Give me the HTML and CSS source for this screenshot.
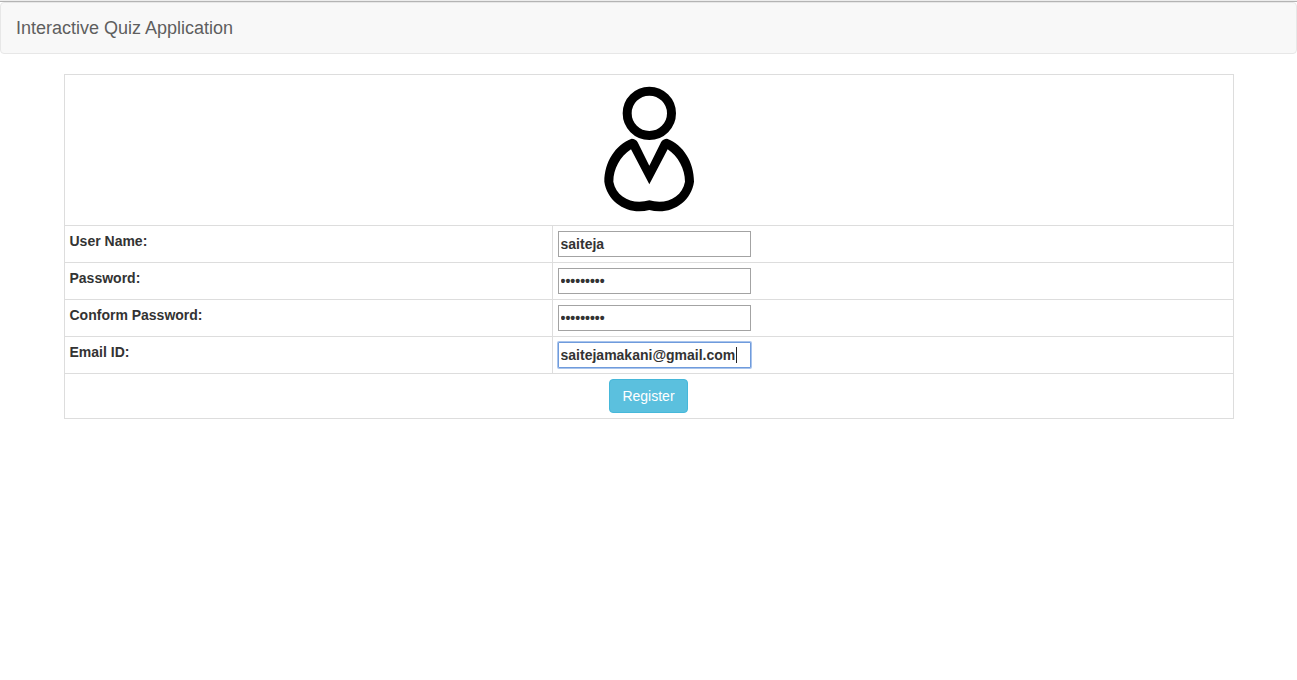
FILE: index.html
```html
<!DOCTYPE html>
<html lang="en">
<head>
<meta charset="utf-8">
<title>Interactive Quiz Application</title>
<link rel="stylesheet" href="styles.css">
</head>
<body>
<nav class="navbar"><a class="brand" href="#">Interactive Quiz Application</a></nav>
<main class="container">
<form>
<table class="form-table">
<colgroup><col class="label-col"><col></colgroup>
<tbody>
<tr><td class="center" colspan="2">
<svg class="avatar" viewBox="27 30 420 420" role="img" aria-label="User">
<circle cx="238" cy="130" r="66.5" fill="none" stroke="#000" stroke-width="27"/>
<path fill-rule="evenodd" d="M185 206C192 206 200 210 203 217L238 287L273 217C276 210 284 206 291 206C340 225 372 275 372 335C365 388 318 424 268 424Q252 424 238 420Q224 424 208 424C158 424 110 388 103 335C103 275 136 225 185 206ZM183 238L238 343L293 238C325 260 345 297 345 335C338 373 305 395 268 395Q252 395 238 391Q224 395 208 395C171 395 137 373 130 335C130 297 150 260 183 238Z"/>
</svg></td></tr>
<tr><th><label for="user">User Name:</label></th><td><input class="field" id="user" type="text" value="saiteja"></td></tr>
<tr><th><label for="pass">Password:</label></th><td><input class="field" id="pass" type="password" value="saiteja12"></td></tr>
<tr><th><label for="confirm">Conform Password:</label></th><td><input class="field" id="confirm" type="password" value="saiteja12"></td></tr>
<tr><th><label for="email">Email ID:</label></th><td><div class="active"><input class="field field-active" id="email" type="text" value="saitejamakani@gmail.com"><span class="caret"></span></div></td></tr>
<tr><td class="center" colspan="2"><button class="btn" type="submit">Register</button></td></tr>
</tbody>
</table>
</form>
</main>
</body>
</html>
```
FILE: styles.css
```css
* { box-sizing: border-box; }
html {
  background: #fff;
  border-top: 1px solid #ededed;
}
body {
  margin: 0;
  border-top: 1px solid #b4b4b4;
  color: #333;
  font-family: "Liberation Sans", Arial, sans-serif;
  font-size: 14px;
  line-height: 20px;
}
.navbar {
  display: flex;
  min-height: 52px;
  margin-bottom: 20px;
  background: #f8f8f8;
  border: 1px solid #e7e7e7;
  border-radius: 4px;
}
.brand {
  padding: 15px;
  color: #5e5e5e;
  font-size: 18px;
  text-decoration: none;
}
.container {
  max-width: 1170px;
  margin: 0 auto;
}
.form-table {
  width: 100%;
  border-collapse: collapse;
  table-layout: fixed;
}
.label-col { width: 41.75%; }
.form-table th, .form-table td {
  padding: 5px;
  border: 1px solid #ddd;
  text-align: left;
  vertical-align: top;
}
.form-table .center { text-align: center; }
.avatar {
  display: block;
  width: 140px;
  height: 140px;
  margin: 0 auto;
}
.field {
  display: block;
  width: 193px;
  height: 26px;
  padding: 1px 2px;
  border: 1px solid #a3a3a3;
  background: #fff;
  color: #333;
  font: bold 14px/20px "Liberation Sans", Arial, sans-serif;
  outline: none;
}
.active {
  position: relative;
  width: 193px;
}
.field-active {
  border-color: #6f9bdc;
  border-radius: 1px;
  box-shadow: 0 0 0 1px #a9c4ec;
}
.caret {
  position: absolute;
  top: 5px;
  right: 14px;
  width: 1px;
  height: 16px;
  background: #222;
}
.btn {
  padding: 6px 12px;
  border: 1px solid #46b8da;
  border-radius: 4px;
  background: #5bc0de;
  color: #fff;
  font: 14px/20px "Liberation Sans", Arial, sans-serif;
}
```
